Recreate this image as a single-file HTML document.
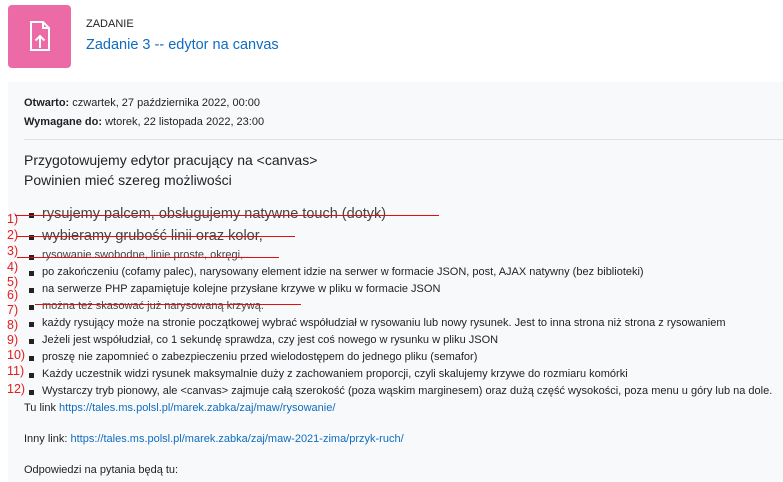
<!DOCTYPE html>
<html><head><meta charset="utf-8"><style>
body{margin:0;width:783px;height:482px;overflow:hidden;background:#fff;font-family:"Liberation Sans",sans-serif;color:#1d2125;position:relative}
.a{position:absolute;white-space:nowrap}
.icon{left:8px;top:5px;width:63px;height:63px;background:#ec6aa5;border-radius:4px}
.panel{left:8px;top:82px;width:775px;height:400px;background:#f8f9fa}
.hr{left:24px;top:139px;width:759px;height:1px;background:#dee2e6}
.s{font-size:11px;color:#1d2125}
.b{font-size:14.5px;color:#444}
.n{font-size:12.5px;color:#e02020;left:7px}
.bul{left:29px;width:5px;height:5px;background:#222}
.red{height:1px;background:#e01010}
a{color:#0f6cbf;text-decoration:none}
</style></head><body>
<div class="a icon">
<svg width="63" height="63" viewBox="0 0 63 63"><path d="M23 17h12l6 6v22H23z M35 17v6h6" fill="none" stroke="#fff" stroke-width="2"/><path d="M32 43V31 M27.5 35.5L32 31l4.5 4.5" fill="none" stroke="#fff" stroke-width="2"/></svg>
</div>
<div class="a" style="left:86px;top:18px;font-size:11px;color:#1d2125">ZADANIE</div>
<div class="a" style="left:86px;top:37px;font-size:14.5px;color:#0f6cbf">Zadanie 3 -- edytor na canvas</div>
<div class="a panel"></div>
<div class="a s" style="left:24px;top:97px"><b>Otwarto:</b> czwartek, 27 października 2022, 00:00</div>
<div class="a s" style="left:24px;top:116px"><b>Wymagane do:</b> wtorek, 22 listopada 2022, 23:00</div>
<div class="a hr"></div>
<div class="a" style="left:24px;top:152px;font-size:14px">Przygotowujemy edytor pracujący na &lt;canvas&gt;</div>
<div class="a" style="left:24px;top:172px;font-size:14px">Powinien mieć szereg możliwości</div>

<div class="a bul" style="top:213px"></div><div class="a b" style="left:42px;top:206px">rysujemy palcem, obsługujemy natywne touch (dotyk)</div>
<div class="a bul" style="top:235px"></div><div class="a b" style="left:42px;top:228px">wybieramy grubość linii oraz kolor,</div>
<div class="a bul" style="top:255px"></div><div class="a s" style="left:42px;top:249px;color:#444">rysowanie swobodne, linie proste, okręgi,..</div>
<div class="a bul" style="top:271px"></div><div class="a s" style="left:42px;top:266px">po zakończeniu (cofamy palec), narysowany element idzie na serwer w formacie JSON, post, AJAX natywny (bez biblioteki)</div>
<div class="a bul" style="top:288px"></div><div class="a s" style="left:42px;top:283px">na serwerze PHP zapamiętuje kolejne przysłane krzywe w pliku w formacie JSON</div>
<div class="a bul" style="top:305px"></div><div class="a s" style="left:42px;top:300px;color:#444">można też skasować już narysowaną krzywą.</div>
<div class="a bul" style="top:322px"></div><div class="a s" style="left:42px;top:317px">każdy rysujący może na stronie początkowej wybrać współudział w rysowaniu lub nowy rysunek. Jest to inna strona niż strona z rysowaniem</div>
<div class="a bul" style="top:339px"></div><div class="a s" style="left:42px;top:334px">Jeżeli jest współudział, co 1 sekundę sprawdza, czy jest coś nowego w rysunku w pliku JSON</div>
<div class="a bul" style="top:356px"></div><div class="a s" style="left:42px;top:351px">proszę nie zapomnieć o zabezpieczeniu przed wielodostępem do jednego pliku (semafor)</div>
<div class="a bul" style="top:373px"></div><div class="a s" style="left:42px;top:368px">Każdy uczestnik widzi rysunek maksymalnie duży z zachowaniem proporcji, czyli skalujemy krzywe do rozmiaru komórki</div>
<div class="a bul" style="top:390px"></div><div class="a s" style="left:42px;top:385px">Wystarczy tryb pionowy, ale &lt;canvas&gt; zajmuje całą szerokość (poza wąskim marginesem) oraz dużą część wysokości, poza menu u góry lub na dole.</div>
<div class="a s" style="left:24px;top:402px">Tu link <a>https://tales.ms.polsl.pl/marek.zabka/zaj/maw/rysowanie/</a></div>
<div class="a s" style="left:24px;top:433px">Inny link: <a>https://tales.ms.polsl.pl/marek.zabka/zaj/maw-2021-zima/przyk-ruch/</a></div>
<div class="a s" style="left:24px;top:464px">Odpowiedzi na pytania będą tu:</div>

<div class="a n" style="top:212px">1)</div>
<div class="a n" style="top:228px">2)</div>
<div class="a n" style="top:244px">3)</div>
<div class="a n" style="top:260px">4)</div>
<div class="a n" style="top:275px">5)</div>
<div class="a n" style="top:288px">6)</div>
<div class="a n" style="top:303px">7)</div>
<div class="a n" style="top:318px">8)</div>
<div class="a n" style="top:333px">9)</div>
<div class="a n" style="top:348px">10)</div>
<div class="a n" style="top:364px">11)</div>
<div class="a n" style="top:382px">12)</div>

<div class="a red" style="left:15px;top:215px;width:424px"></div>
<div class="a red" style="left:17px;top:236px;width:278px"></div>
<div class="a red" style="left:17px;top:257px;width:262px"></div>
<div class="a red" style="left:35px;top:304px;width:266px"></div>
</body></html>
